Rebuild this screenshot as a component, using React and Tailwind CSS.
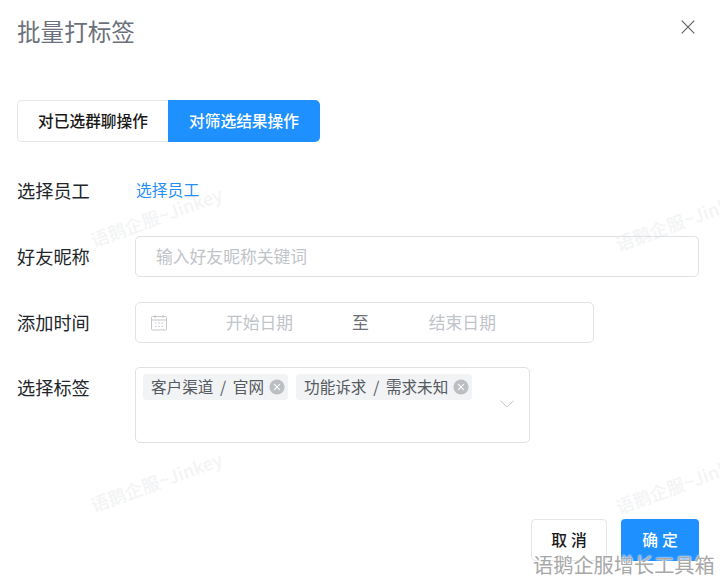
const cjk = { fontFamily: '"Noto Sans CJK SC", "Liberation Sans", sans-serif' };

function Watermark({ className }) {
  return (
    <div className={`absolute text-[18px] leading-[24px] whitespace-nowrap text-[#f3f4f5] font-medium rotate-[-20deg] origin-left pointer-events-none ${className}`}>
      语鹅企服~Jinkey
    </div>
  );
}

function Row({ label, children, className = "items-center" }) {
  return (
    <div className={`flex ${className}`}>
      <div className="w-[118px] shrink-0 text-[18.2px] leading-[41px] text-[#22262c]">{label}</div>
      {children}
    </div>
  );
}

function Tag({ children }) {
  return (
    <div className="flex items-center h-[26px] rounded-[4px] bg-[#f2f3f5] pl-2 pr-[3px] text-[15.6px] text-[#555a61] whitespace-nowrap [word-spacing:3.2px]">
      <span className="-mt-[1px]">{children}</span>
      <svg width="16" height="16" viewBox="0 0 16 16" className="ml-[5px] -mt-[1px]">
        <circle cx="8" cy="8" r="7.6" fill="#bbbec3" />
        <path d="M5.2 5.2 10.8 10.8M10.8 5.2 5.2 10.8" stroke="#fff" strokeWidth="1.1" />
      </svg>
    </div>
  );
}

export default function App() {
  return (
    <div style={cjk} className="relative w-[720px] h-[581px] overflow-hidden bg-white">
      <Watermark className="left-[91px] top-[228px]" />
      <Watermark className="left-[616px] top-[232px]" />
      <Watermark className="left-[91px] top-[493px]" />
      <Watermark className="left-[616px] top-[495px]" />

      <div className="relative px-[17px] pt-[13px]">
        <div className="flex items-center justify-between h-[36px]">
          <h1 className="text-[23.6px] leading-[36px] font-normal text-[#6c727c]">批量打标签</h1>
          <svg width="14" height="14" viewBox="0 0 14 14" className="mr-[8px] -mt-[8px]">
            <path d="M.7.7 13.3 13.3M13.3.7.7 13.3" stroke="#5f6368" strokeWidth="1.2" fill="none" />
          </svg>
        </div>

        <div className="flex mt-[51px] w-[303px] h-[42px]">
          <div className="w-[151px] flex items-center justify-center rounded-l-[5px] border border-[#e4e6e9] border-r-0 text-[15.7px] font-medium text-[#1a1a1a]">
            对已选群聊操作
          </div>
          <div className="w-[152px] flex items-center justify-center rounded-r-[5px] bg-[#1e90ff] text-[15.7px] font-medium text-white">
            对筛选结果操作
          </div>
        </div>

        <div className="flex flex-col mt-[28px] gap-[25px]">
          <Row label="选择员工">
            <span className="text-[15.8px] ml-[1px] -mt-[1px] text-[#2490f5]">选择员工</span>
          </Row>
          <Row label="好友昵称">
            <div className="w-[564px] h-[41px] flex items-center px-[20px] rounded-[5px] border border-[#dfe1e4] text-[16.8px] text-[#c1c4c9]">
              输入好友昵称关键词
            </div>
          </Row>
          <Row label="添加时间">
            <div className="w-[459px] h-[41px] flex items-center rounded-[5px] border border-[#e1e3e6] text-[16.8px] text-[#c1c4c9]">
              <svg width="18" height="18" viewBox="0 0 18 18" fill="none" stroke="#c4c7cb" strokeWidth="1" className="ml-[14px]">
                <rect x="1.5" y="2.5" width="15" height="13.5" rx="1" />
                <path d="M1.5 6h15M5 1v3M13 1v3" />
                <path d="M5 9h1.5M8.3 9h1.5M11.6 9h1.5M5 12.5h1.5M8.3 12.5h1.5M11.6 12.5h1.5" />
              </svg>
              <span className="ml-[58px] w-[68px] whitespace-nowrap">开始日期</span>
              <span className="ml-[58px] text-[#6b7076]">至</span>
              <span className="ml-[60px] w-[68px] whitespace-nowrap">结束日期</span>
            </div>
          </Row>
          <Row label="选择标签" className="items-start -mt-[1px]">
            <div className="relative w-[395px] h-[76px] rounded-[5px] border border-[#dfe1e4] pl-[7px] pt-[6px]">
              <div className="flex gap-[8px]">
                <Tag>客户渠道 / 官网</Tag>
                <Tag>功能诉求 / 需求未知</Tag>
              </div>
              <svg width="14" height="8" viewBox="0 0 14 8" className="absolute right-[15px] top-[32px]">
                <path d="M.5.7 7 7 13.5.7" stroke="#c4c7cb" strokeWidth="1" fill="none" />
              </svg>
            </div>
          </Row>
        </div>

        <div className="flex justify-end gap-[14px] mt-[76px] pr-[4px]">
          <div className="w-[76px] h-[42px] flex items-center justify-center rounded-[4px] border border-[#e4e6e9] pl-[4px] text-[15.8px] font-medium tracking-[4px] text-[#1a1a1a]">
            取消
          </div>
          <div className="w-[78px] h-[42px] flex items-center justify-center rounded-[4px] bg-[#1e90ff] pl-[4px] text-[15.8px] font-medium tracking-[4px] text-white">
            确定
          </div>
        </div>
      </div>

      <div className="absolute left-[533px] top-[551px] text-[20.2px] leading-[28px] whitespace-nowrap text-[#a8a8a8] [text-shadow:0_0_2px_#fff,0_0_2px_#fff]">
        语鹅企服增长工具箱
      </div>
    </div>
  );
}
